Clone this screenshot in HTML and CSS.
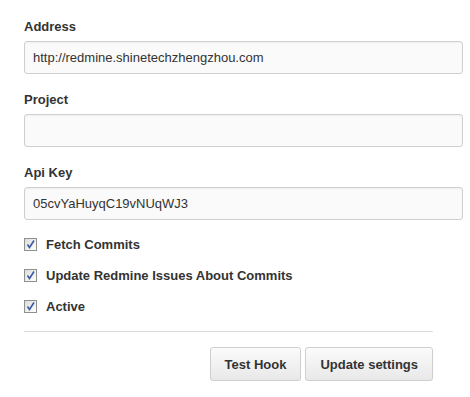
FILE: index.html
```html
<!DOCTYPE html>
<html lang="en">
<head>
    <meta charset="UTF-8">
    <meta name="viewport" content="width=device-width, initial-scale=1.0">
    <title>Redmine Hook Settings</title>
    <link rel="stylesheet" href="styles.css">
</head>
<body>

<form class="hook-form">
    <div class="field">
        <label class="field-label" for="address">Address</label>
        <input class="text-input" id="address" type="text" value="http://redmine.shinetechzhengzhou.com">
    </div>
    <div class="field">
        <label class="field-label" for="project">Project</label>
        <input class="text-input" id="project" type="text" value="">
    </div>
    <div class="field">
        <label class="field-label" for="apikey">Api Key</label>
        <input class="text-input" id="apikey" type="text" value="05cvYaHuyqC19vNUqWJ3">
    </div>

    <div class="options">
        <label class="option">
            <span class="check"><svg width="13" height="13" viewBox="0 0 13 13"><path d="M3.5 6.5 L5.5 9.5 L10 2.5" fill="none" stroke="#3d5ba0" stroke-width="1.6"/></svg></span>
            Fetch Commits
        </label>
        <label class="option">
            <span class="check"><svg width="13" height="13" viewBox="0 0 13 13"><path d="M3.5 6.5 L5.5 9.5 L10 2.5" fill="none" stroke="#3d5ba0" stroke-width="1.6"/></svg></span>
            Update Redmine Issues About Commits
        </label>
        <label class="option">
            <span class="check"><svg width="13" height="13" viewBox="0 0 13 13"><path d="M3.5 6.5 L5.5 9.5 L10 2.5" fill="none" stroke="#3d5ba0" stroke-width="1.6"/></svg></span>
            Active
        </label>
    </div>

    <hr class="divider">

    <div class="actions">
        <button type="button" class="btn">Test Hook</button>
        <button type="button" class="btn">Update settings</button>
    </div>
</form>

</body>
</html>
```

FILE: styles.css
```css
body {
    margin: 0;
    background-color: white;
    font-family: "Liberation Sans", Arial, sans-serif;
    font-size: 13px;
    color: #333;
}
.hook-form {
    padding: 18px 0 0 24px;
    width: 439px;
}
.field {
    display: flex;
    flex-direction: column;
    margin-bottom: 17px;
}
.field-label {
    font-weight: bold;
    line-height: 18px;
    margin-bottom: 5px;
}
.text-input {
    box-sizing: border-box;
    width: 439px;
    height: 33px;
    padding: 0 8px;
    border: 1px solid #cfcfcf;
    border-radius: 3px;
    background-color: #fafafa;
    box-shadow: inset 0 1px 2px rgba(0, 0, 0, 0.05);
    font-family: "Liberation Sans", Arial, sans-serif;
    font-size: 13px;
    color: #333;
    outline: none;
}
.options {
    display: flex;
    flex-direction: column;
    gap: 13px;
    margin-top: -1px;
}
.option {
    display: flex;
    align-items: center;
    gap: 9px;
    font-weight: bold;
    line-height: 18px;
}
.check {
    box-sizing: border-box;
    display: flex;
    width: 13px;
    height: 13px;
    margin-top: -2px;
    border: 1px solid #8e8f8f;
    background: linear-gradient(135deg, #dcdcdc, #ffffff);
}
.check svg {
    margin: -1px;
}
.divider {
    width: 409px;
    margin: 15px 0 0 0;
    border: none;
    border-top: 1px solid #dcdcdc;
}
.actions {
    display: flex;
    justify-content: flex-end;
    gap: 4px;
    width: 409px;
    margin-top: 15px;
}
.btn {
    height: 34px;
    padding: 0 14px;
    border: 1px solid #cfcfcf;
    border-radius: 3px;
    background: linear-gradient(#fbfbfb, #e8e8e8);
    box-shadow: 0 1px 1px rgba(0, 0, 0, 0.06);
    font-family: "Liberation Sans", Arial, sans-serif;
    font-size: 13px;
    font-weight: bold;
    color: #333;
    cursor: pointer;
}
```
